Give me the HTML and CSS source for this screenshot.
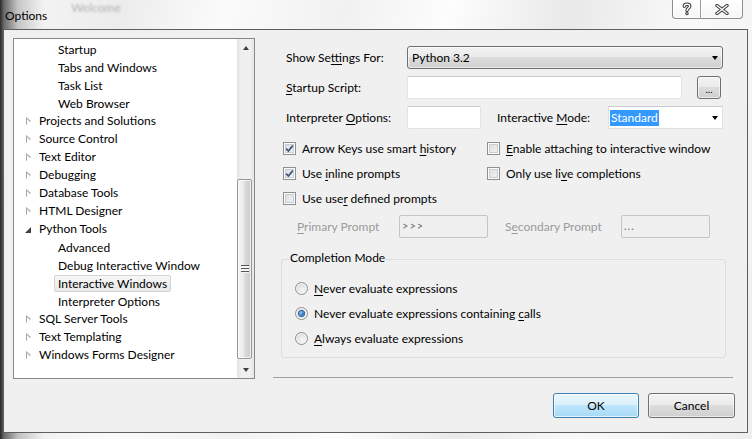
FILE: index.html
```html
<!DOCTYPE html>
<html>
<head>
<meta charset="utf-8">
<title>Options</title>
<link rel="stylesheet" href="styles.css">
</head>
<body>
<div class="window">
  <div class="titlebar">
    <span class="title">Options</span>
    <span class="ghost">Welcome</span>
    <div class="caption">
      <div class="cbtn help">
        <svg width="10" height="14" viewBox="0 0 10 14"><path d="M2.3 4.2 C2.3 1.6 7.7 1.6 7.7 4.2 C7.7 6.2 5 6 5 8.6" fill="none" stroke="#3a3a3a" stroke-width="3.4" stroke-linecap="round"/><circle cx="5" cy="11.6" r="1.7" fill="#3a3a3a"/><path d="M2.3 4.2 C2.3 1.6 7.7 1.6 7.7 4.2 C7.7 6.2 5 6 5 8.6" fill="none" stroke="#fff" stroke-width="1.4" stroke-linecap="round"/><circle cx="5" cy="11.6" r="0.7" fill="#fff"/></svg>
      </div>
      <div class="cbtn close">
        <svg width="14" height="11" viewBox="0 0 14 11"><path d="M2 1.5 L12 9.5 M12 1.5 L2 9.5" fill="none" stroke="#3a3a3a" stroke-width="3.4" stroke-linecap="round"/><path d="M2 1.5 L12 9.5 M12 1.5 L2 9.5" fill="none" stroke="#fff" stroke-width="1.4" stroke-linecap="round"/></svg>
      </div>
    </div>
  </div>

  <div class="client">
    <div class="tree">
      <div class="list">
        <div class="node child"><span class="label">Startup</span></div>
        <div class="node child"><span class="label">Tabs and Windows</span></div>
        <div class="node child"><span class="label">Task List</span></div>
        <div class="node child"><span class="label">Web Browser</span></div>
        <div class="node top"><span class="exp closed"></span><span class="label">Projects and Solutions</span></div>
        <div class="node top"><span class="exp closed"></span><span class="label">Source Control</span></div>
        <div class="node top"><span class="exp closed"></span><span class="label">Text Editor</span></div>
        <div class="node top"><span class="exp closed"></span><span class="label">Debugging</span></div>
        <div class="node top"><span class="exp closed"></span><span class="label">Database Tools</span></div>
        <div class="node top"><span class="exp closed"></span><span class="label">HTML Designer</span></div>
        <div class="node top"><span class="exp open"></span><span class="label">Python Tools</span></div>
        <div class="node child"><span class="label">Advanced</span></div>
        <div class="node child"><span class="label">Debug Interactive Window</span></div>
        <div class="node child selected"><span class="label">Interactive Windows</span></div>
        <div class="node child"><span class="label">Interpreter Options</span></div>
        <div class="node top"><span class="exp closed"></span><span class="label">SQL Server Tools</span></div>
        <div class="node top"><span class="exp closed"></span><span class="label">Text Templating</span></div>
        <div class="node top"><span class="exp closed"></span><span class="label">Windows Forms Designer</span></div>
      </div>
      <div class="vscroll">
        <div class="sb-arrow"><span class="tri-up"></span></div>
        <div class="sb-track">
          <div class="sb-thumb"><span class="grip"></span></div>
        </div>
        <div class="sb-arrow"><span class="tri-down"></span></div>
      </div>
    </div>

    <div class="pane">
      <div class="frow r1">
        <span class="lbl w-lbl">Show Se<u>t</u>tings For:</span>
        <div class="combo push w-combo"><span class="ctext">Python 3.2</span><span class="tri-down black"></span></div>
      </div>
      <div class="frow r2">
        <span class="lbl w-lbl"><u>S</u>tartup Script:</span>
        <div class="textbox w-script"></div>
        <div class="pushbtn browse">...</div>
      </div>
      <div class="frow r3">
        <span class="lbl w-lbl">Interpreter <u>O</u>ptions:</span>
        <div class="textbox w-opts"></div>
        <span class="lbl w-mode">Interactive <u>M</u>ode:</span>
        <div class="combo edit w-mcombo"><span class="seltext">Standard</span><span class="tri-down black"></span></div>
      </div>

      <div class="checks">
        <div class="check"><span class="cb on"><svg width="9" height="9" viewBox="0 0 9 9"><path d="M1.2 4.6 L3.4 7 L7.8 1.6" fill="none" stroke="#3d5377" stroke-width="1.7"/></svg></span><span>Arrow Keys use smart <u>h</u>istory</span></div>
        <div class="check"><span class="cb"></span><span><u>E</u>nable attaching to interactive window</span></div>
        <div class="check"><span class="cb on"><svg width="9" height="9" viewBox="0 0 9 9"><path d="M1.2 4.6 L3.4 7 L7.8 1.6" fill="none" stroke="#3d5377" stroke-width="1.7"/></svg></span><span>Use <u>i</u>nline prompts</span></div>
        <div class="check"><span class="cb"></span><span>Only use li<u>v</u>e completions</span></div>
        <div class="check"><span class="cb"></span><span>Use use<u>r</u> defined prompts</span></div>
      </div>

      <div class="prompts">
        <span class="lbl dis w-pp"><u>P</u>rimary Prompt</span>
        <div class="textbox disabled w-pbox">&gt;&gt;&gt;</div>
        <span class="lbl dis w-sp">S<u>e</u>condary Prompt</span>
        <div class="textbox disabled w-pbox">...</div>
      </div>

      <div class="group">
        <span class="group-title">Completion Mode</span>
        <div class="radios">
          <div class="radio"><span class="rb"></span><span><u>N</u>ever evaluate expressions</span></div>
          <div class="radio"><span class="rb on"></span><span>Never evaluate expressions containing <u>c</u>alls</span></div>
          <div class="radio"><span class="rb"></span><span><u>A</u>lways evaluate expressions</span></div>
        </div>
      </div>

      <div class="sep"></div>

      <div class="buttons">
        <div class="pushbtn default w-ok">OK</div>
        <div class="pushbtn w-cancel">Cancel</div>
      </div>
    </div>
  </div>
</div>
</body>
</html>
```

FILE: styles.css
```css
* { box-sizing: border-box; }

html, body { margin: 0; padding: 0; }

body {
  width: 752px;
  height: 439px;
  overflow: hidden;
  font-family: Lato, "Liberation Sans", sans-serif;
  font-size: 12px;
  color: #000;
  background:
    linear-gradient(to right, rgba(30,30,30,0.95) 0, rgba(60,60,60,0.75) 4px, rgba(110,110,110,0.35) 18px, rgba(255,255,255,0) 44px),
    linear-gradient(105deg, #f7f7f7 0%, #ececec 14%, #fbfbfb 26%, #f1f1f1 40%, #fdfdfd 52%, #e9e9e9 66%, #f9f9f9 80%, #eeeeee 100%);
}

.window {
  width: 752px;
  height: 439px;
  display: flex;
  flex-direction: column;
}

/* ---------- title bar ---------- */
.titlebar {
  height: 29px;
  display: flex;
  align-items: center;
}

.title {
  padding-left: 5px;
  margin-top: 2px;
  font-size: 12px;
  color: #000;
}

.ghost {
  margin-left: 24px;
  align-self: flex-start;
  font-size: 12px;
  color: rgba(0,0,0,0.28);
  filter: blur(1.2px);
}

.caption {
  margin-left: auto;
  margin-right: 9px;
  align-self: flex-start;
  display: flex;
}

.cbtn {
  height: 19px;
  display: flex;
  align-items: center;
  justify-content: center;
  border: 1px solid #8d8d8d;
  border-top: none;
  background: linear-gradient(#ffffff, rgba(245,245,245,0.9));
  box-shadow: inset 0 0 0 1px rgba(255,255,255,0.8);
}

.cbtn.help {
  width: 28px;
  border-bottom-left-radius: 4px;
  border-right: none;
}

.cbtn.close {
  width: 43px;
  border-bottom-right-radius: 4px;
  border-left: 1px solid #9a9a9a;
}

/* ---------- client area ---------- */
.client {
  margin-left: 3px;
  width: 745px;
  height: 404px;
  border: 1px solid #5e5e5e;
  background: #f0f0f0;
  padding: 8px 0 0 9px;
  display: flex;
  align-items: flex-start;
  gap: 18px;
}

/* ---------- tree ---------- */
.tree {
  width: 242px;
  height: 341px;
  border: 1px solid #828790;
  background: #fff;
  display: flex;
}

.list {
  flex: 1;
  padding-top: 1px;
}

.node {
  height: 18px;
  display: flex;
  align-items: center;
  white-space: nowrap;
}

.node.top { padding-left: 11px; }
.node.child { padding-left: 40px; }

.node .label {
  height: 17px;
  line-height: 15px;
  padding: 0 3px;
  border: 1px solid transparent;
  border-radius: 2px;
}

.node.top .label { padding: 0; border: none; }

.node.selected .label {
  background: linear-gradient(#f7f7f7, #e8e8e8);
  border-color: #d4d4d4;
}

.exp {
  width: 14px;
  height: 18px;
  position: relative;
}

.exp.closed::before {
  content: "";
  position: absolute;
  left: 1px;
  top: 5px;
  width: 0;
  height: 0;
  border-top: 4.5px solid transparent;
  border-bottom: 4.5px solid transparent;
  border-left: 5px solid #a6a6a6;
}

.exp.closed::after {
  content: "";
  position: absolute;
  left: 2px;
  top: 6.5px;
  width: 0;
  height: 0;
  border-top: 3px solid transparent;
  border-bottom: 3px solid transparent;
  border-left: 3px solid #fff;
}

.exp.open::before {
  content: "";
  position: absolute;
  left: 0;
  top: 7px;
  width: 0;
  height: 0;
  border-left: 6px solid transparent;
  border-bottom: 6px solid #404040;
}

/* ---------- scrollbar ---------- */
.vscroll {
  width: 17px;
  display: flex;
  flex-direction: column;
  background: linear-gradient(to right, #e2e2e2, #f0f0f0 25%, #f0f0f0 75%, #e6e6e6);
}

.sb-arrow {
  height: 17px;
  display: flex;
  align-items: center;
  justify-content: center;
}

.tri-up {
  width: 0; height: 0;
  border-left: 3.5px solid transparent;
  border-right: 3.5px solid transparent;
  border-bottom: 4px solid #404040;
}

.tri-down {
  width: 0; height: 0;
  border-left: 3.5px solid transparent;
  border-right: 3.5px solid transparent;
  border-top: 4px solid #404040;
}

.tri-down.black { border-top-color: #000; }

.sb-track {
  flex: 1;
  padding-top: 123px;
}

.sb-thumb {
  width: 15px;
  height: 180px;
  border: 1px solid #979797;
  border-radius: 2px;
  background: linear-gradient(to right, #f6f6f6, #e9e9e9 45%, #d8d8d8 55%, #cdcdcd);
  box-shadow: inset 0 0 0 1px rgba(255,255,255,0.7);
  display: flex;
  align-items: center;
  justify-content: center;
}

.grip {
  width: 8px;
  height: 8px;
  background: repeating-linear-gradient(#555 0, #555 1px, #f4f4f4 1px, #f4f4f4 3px);
}

/* ---------- right pane ---------- */
.pane {
  width: 462px;
  display: flex;
  flex-direction: column;
}

.frow {
  display: flex;
  align-items: center;
  height: 23px;
  padding-left: 13px;
}

.r1 { margin-top: 8px; }
.r2, .r3 { margin-top: 7px; }

.lbl { white-space: nowrap; }
.w-lbl { width: 121px; }
.w-mode { width: 111px; margin-left: 16px; }

.combo {
  height: 23px;
  display: flex;
  align-items: center;
  justify-content: space-between;
  padding: 0 4px 0 4px;
}

.combo.push {
  border: 1px solid #707070;
  border-radius: 3px;
  background: linear-gradient(#f2f2f2 0%, #ebebeb 50%, #dddddd 50%, #cfcfcf 100%);
  box-shadow: inset 0 0 0 1px rgba(255,255,255,0.6);
}

.w-combo { width: 316px; }

.combo.edit {
  background: #fff;
  border: 1px solid #dcdfe5;
  border-top-color: #c9ccd2;
  padding-left: 1px;
}

.w-mcombo { width: 115px; }

.seltext {
  background: #3399ff;
  color: #fff;
  padding: 0 1px;
  line-height: 16px;
}

.textbox {
  height: 23px;
  background: #fff;
  border: 1px solid #e2e3ea;
  border-top-color: #c6c8cf;
  border-radius: 2px;
}

.w-script { width: 275px; }
.w-opts { width: 74px; }

.pushbtn {
  height: 25px;
  border: 1px solid #707070;
  border-radius: 3px;
  background: linear-gradient(#f2f2f2 0%, #ebebeb 50%, #dddddd 50%, #cfcfcf 100%);
  box-shadow: inset 0 0 0 1px rgba(255,255,255,0.6);
  display: flex;
  align-items: center;
  justify-content: center;
}

.pushbtn.browse {
  width: 24px;
  height: 23px;
  margin-left: 15px;
  font-size: 10px;
  padding-top: 2px;
}

.pushbtn.default {
  border-color: #3c7fb1;
  background: linear-gradient(#eaf6fd 0%, #d9f0fc 50%, #bee6fd 50%, #a7d9f5 100%);
  box-shadow: inset 0 0 0 1px rgba(255,255,255,0.7);
}

/* ---------- checkboxes ---------- */
.checks {
  margin-top: 7px;
  padding-left: 10px;
  display: grid;
  grid-template-columns: 204px auto;
  grid-auto-rows: 25px;
}

.check {
  display: flex;
  align-items: center;
  gap: 6px;
  white-space: nowrap;
}

.cb {
  width: 13px;
  height: 13px;
  border: 1px solid #8e8f8f;
  box-shadow: inset 0 0 0 1px #fdfdfd, inset 0 0 0 2px #c9ccd1;
  display: flex;
  align-items: center;
  justify-content: center;
  background-image: linear-gradient(135deg, #d9dbdf, #f6f6f6);
}

/* ---------- prompts ---------- */
.prompts {
  margin-top: 4px;
  padding-left: 24px;
  display: flex;
  align-items: center;
  height: 23px;
}

.dis { color: #9a9a9a; }
.w-pp { width: 102px; }
.w-sp { width: 116px; margin-left: 17px; }

.textbox.disabled {
  width: 89px;
  background: #f0f0f0;
  border: 1px solid #c5c5c5;
  border-radius: 2px;
  color: #6d6d6d;
  font-size: 11px;
  letter-spacing: 1px;
  padding-left: 2px;
  line-height: 19px;
}

/* ---------- group ---------- */
.group {
  margin-top: 21px;
  margin-left: 8px;
  width: 445px;
  height: 99px;
  border: 1px solid #d5dfe5;
  border-radius: 3px;
  padding-left: 13px;
}

.group-title {
  display: block;
  width: max-content;
  margin: -10px 0 0 -6px;
  padding: 0 1px;
  line-height: 16px;
  background: #f0f0f0;
}

.radios {
  margin-top: 10px;
  display: flex;
  flex-direction: column;
}

.radio {
  height: 25px;
  display: flex;
  align-items: center;
  gap: 6px;
  white-space: nowrap;
}

.rb {
  width: 13px;
  height: 13px;
  border-radius: 50%;
  border: 1px solid #8e8f8f;
  background: radial-gradient(circle at 60% 65%, #f6f6f6 0%, #dcdcdc 70%, #cfd1d4 100%);
  box-shadow: inset 0 0 0 1px #f8f8f8;
  display: flex;
  align-items: center;
  justify-content: center;
}

.rb.on::before {
  content: "";
  width: 5px;
  height: 5px;
  border-radius: 50%;
  background: radial-gradient(circle at 35% 35%, #8cc4f4, #1d5fa6 80%);
  box-shadow: 0 0 0 1px #2a5d96;
}

/* ---------- separator + buttons ---------- */
.sep {
  margin-top: 19px;
  width: 460px;
  height: 1px;
  background: #a0a0a0;
}

.buttons {
  margin-top: 15px;
  display: flex;
  justify-content: flex-end;
  gap: 9px;
}

.w-ok { width: 86px; }
.w-cancel { width: 87px; }

u { text-decoration-thickness: 1px; text-underline-offset: 2px; }
```
